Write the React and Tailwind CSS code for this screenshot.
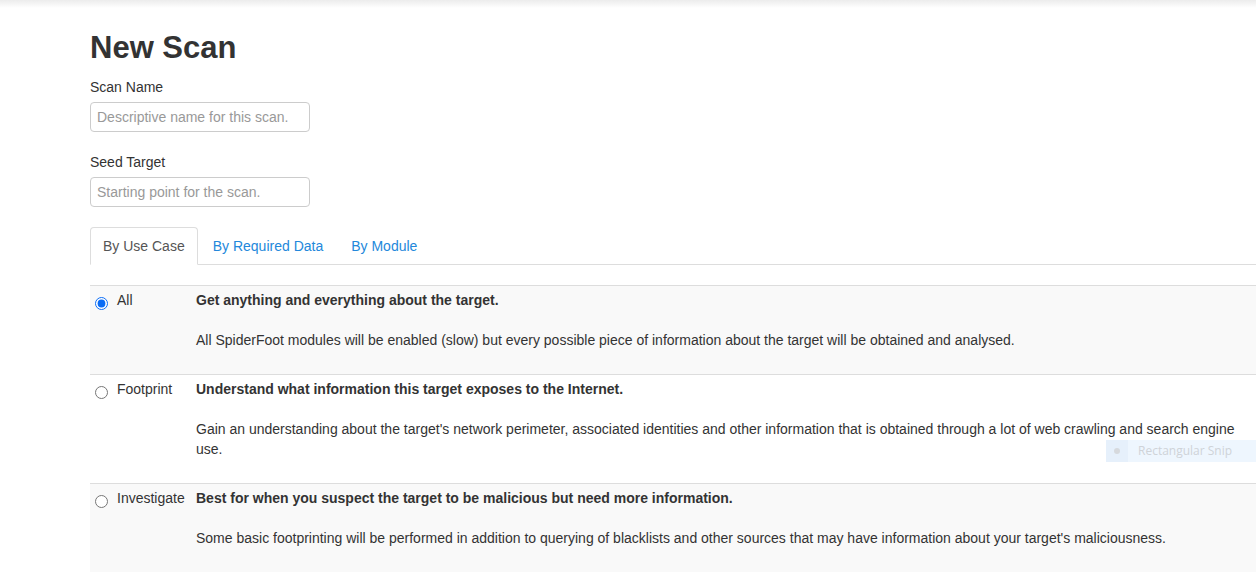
// Formulario "New Scan": nombre, objetivo, pestañas y tabla de casos de uso.
const casos = [
  {
    id: 'all',
    nombre: 'All',
    titulo: 'Get anything and everything about the target.',
    texto:
      'All SpiderFoot modules will be enabled (slow) but every possible piece of information about the target will be obtained and analysed.',
    marcado: true,
  },
  {
    id: 'footprint',
    nombre: 'Footprint',
    titulo: 'Understand what information this target exposes to the Internet.',
    texto:
      "Gain an understanding about the target's network perimeter, associated identities and other information that is obtained through a lot of web crawling and search engine use.",
  },
  {
    id: 'investigate',
    nombre: 'Investigate',
    titulo: 'Best for when you suspect the target to be malicious but need more information.',
    texto:
      "Some basic footprinting will be performed in addition to querying of blacklists and other sources that may have information about your target's maliciousness.",
  },
];

const tabs = ['By Use Case', 'By Required Data', 'By Module'];

function Campo({ label, placeholder }) {
  return (
    <div className="mb-[20px]">
      <label className="mb-[5px] block leading-[20px]">{label}</label>
      <input
        type="text"
        placeholder={placeholder}
        className="block h-[30px] w-[220px] rounded-[4px] border border-[#ccc] px-[6px] text-[14px] leading-[20px] text-[#555] placeholder:text-[#999]"
      />
    </div>
  );
}

export default function App() {
  return (
    <div className="relative min-h-[572px] overflow-hidden bg-white font-['Liberation_Sans',Arial,sans-serif] text-[14px] leading-[20px] text-[#333]">
      {/* sombra del navbar de arriba */}
      <div className="h-[8px] bg-linear-to-b from-[#ececec] to-white" />

      <main className="pl-[90px] pt-[23px]">
        <h1 className="mb-[12px] text-[31px] font-bold leading-[34px]">New Scan</h1>

        <Campo label="Scan Name" placeholder="Descriptive name for this scan." />
        <Campo label="Seed Target" placeholder="Starting point for the scan." />

        <ul className="flex border-b border-[#ddd]">
          {tabs.map((t, i) => (
            <li key={t} className="-mb-px mr-[2px]">
              <span
                className={
                  i === 0
                    ? 'block rounded-t-[4px] border border-[#ddd] border-b-transparent bg-white px-[12px] py-[8px] text-[#555]'
                    : 'block rounded-t-[4px] border border-transparent px-[12px] py-[8px] text-[#2388db]'
                }
              >
                {t}
              </span>
            </li>
          ))}
        </ul>

        <div className="mt-[20px]">
          {casos.map((c, i) => (
            <div
              key={c.id}
              className={`grid grid-cols-[102px_1fr] border-t border-[#ddd] ${i % 2 === 0 ? 'bg-[#f9f9f9]' : 'bg-white'}`}
            >
              <div className="flex items-start pt-[4px]">
                <input
                  type="radio"
                  name="usecase"
                  defaultChecked={c.marcado}
                  className="ml-[5px] mr-[9px] mt-[7px] h-[13px] w-[13px] accent-[#0a6cf5]"
                />
                <span>{c.nombre}</span>
              </div>
              <div className="pb-[24px] pl-[4px] pr-[4px] pt-[4px]">
                <p className="font-bold">{c.titulo}</p>
                <p className="mt-[20px]">{c.texto}</p>
              </div>
            </div>
          ))}
        </div>
      </main>

      {/* tooltip de la herramienta de recorte que quedó en la captura */}
      <div className="absolute left-[1106px] top-[440px] flex h-[22px] w-[150px] items-center bg-[#eef6fe] font-['Open_Sans',sans-serif] text-[12px] text-[#cfd3d8]">
        <span className="flex h-full w-[22px] items-center justify-center bg-[#e6f0fb]">
          <span className="h-[6px] w-[6px] rounded-full bg-[#d6d9dd]" />
        </span>
        <span className="ml-[10px]">Rectangular Snip</span>
      </div>
    </div>
  );
}
